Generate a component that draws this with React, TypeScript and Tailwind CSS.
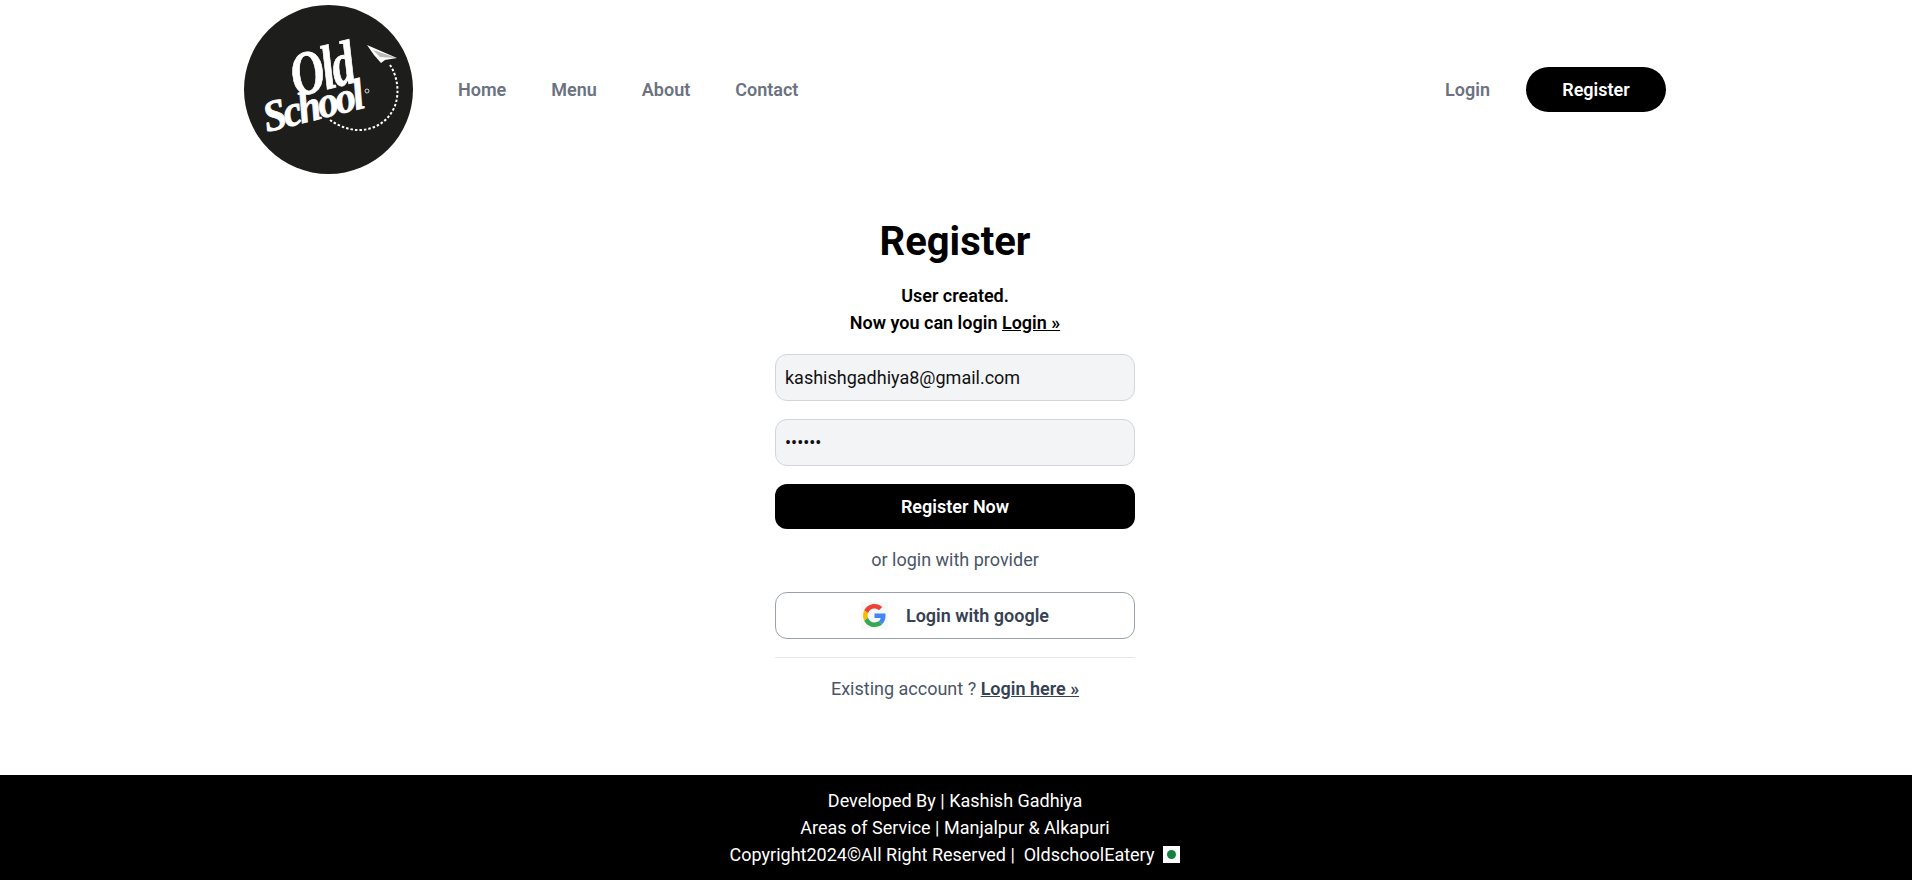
const roboto = "font-['Roboto',sans-serif]";

function Logo() {
  return (
    <div className="w-[169px] h-[169px] rounded-full bg-[#1d1d1b] shrink-0 overflow-hidden">
      <svg viewBox="0 0 169 169" className="w-full h-full">
        <g fill="#fff" stroke="#fff" strokeWidth="0.7" fontFamily="'Liberation Serif',serif" fontStyle="italic" fontWeight="700">
          <text transform="translate(52 92) rotate(-14) scale(0.9 1.2)" fontSize="52" letterSpacing="-3">
            Old
          </text>
          <text transform="translate(23 127) rotate(-14) scale(1.08 1.15)" fontSize="38" letterSpacing="-2.5">
            School
          </text>
        </g>
        <circle cx="123" cy="86" r="2" fill="none" stroke="#fff" strokeWidth="0.8" />
        <path d="M123 40 L153 53 L141 55 L137 58 L130 50 Z" fill="#fff" />
        <path d="M129 45 L153 53 L136 52 Z" fill="#1d1d1b" opacity="0.3" />
        <path
          d="M146 60 C154 72 156 90 150 103 C143 118 128 126 112 125 C102 124 93 120 86 115"
          fill="none"
          stroke="#fff"
          strokeWidth="2"
          strokeDasharray="2.5 2"
        />
      </svg>
    </div>
  );
}

function GoogleIcon() {
  return (
    <span className="w-[27px] h-[27px] bg-[#f8f8f8] flex items-center justify-center">
      <svg viewBox="0 0 48 48" className="w-[23px] h-[23px]">
        <path fill="#EA4335" d="M24 9.5c3.54 0 6.71 1.22 9.21 3.6l6.85-6.85C35.9 2.38 30.47 0 24 0 14.62 0 6.51 5.38 2.56 13.22l7.98 6.19C12.43 13.72 17.74 9.5 24 9.5z" />
        <path fill="#4285F4" d="M46.98 24.55c0-1.57-.15-3.09-.38-4.55H24v9.02h12.94c-.58 2.96-2.26 5.48-4.78 7.18l7.73 6c4.51-4.18 7.09-10.36 7.09-17.65z" />
        <path fill="#FBBC05" d="M10.53 28.59c-.48-1.45-.76-2.99-.76-4.59s.27-3.14.76-4.59l-7.98-6.19C.92 16.46 0 20.12 0 24c0 3.88.92 7.54 2.56 10.78l7.97-6.19z" />
        <path fill="#34A853" d="M24 48c6.48 0 11.93-2.13 15.89-5.81l-7.73-6c-2.15 1.45-4.92 2.3-8.16 2.3-6.26 0-11.57-4.22-13.47-9.91l-7.98 6.19C6.51 42.62 14.62 48 24 48z" />
      </svg>
    </span>
  );
}

export default function App() {
  return (
    <div className={`${roboto} min-h-[880px] flex flex-col bg-white text-base leading-[27px]`}>
      <div className="flex-1 flex flex-col pr-[2px]">
        <header className="w-[1422px] mx-auto h-[178px] flex items-center justify-between">
          <nav className="flex items-center gap-[45px] text-[#6b7280] font-semibold text-[18px]">
            <Logo />
            <a href="#">Home</a>
            <a href="#">Menu</a>
            <a href="#">About</a>
            <a href="#">Contact</a>
          </nav>
          <nav className="flex items-center gap-9 text-[#6b7280] font-semibold text-[18px]">
            <a href="#">Login</a>
            <a href="#" className="w-[140px] h-[45px] rounded-full bg-black text-white flex items-center justify-center">
              Register
            </a>
          </nav>
        </header>

        <main className="flex-1 flex flex-col items-center">
          <h1 className="text-[40px] leading-[60px] font-bold text-black mt-[34px]">Register</h1>
          <div className="text-center font-semibold text-black text-[18px] mt-[10px]">
            <div>User created.</div>
            <div>
              Now you can login{" "}
              <a href="#" className="underline">
                Login »
              </a>
            </div>
          </div>
          <form className="w-[360px] mt-[18px] flex flex-col">
            <input
              readOnly
              value="kashishgadhiya8@gmail.com"
              className="h-[47px] px-[9px] rounded-xl border border-gray-300 bg-gray-100 text-[18px] text-[#111] mb-[18px] outline-none"
            />
            <input
              readOnly
              type="password"
              value="secret"
              className="h-[47px] px-[9px] rounded-xl border border-gray-300 bg-gray-100 text-[18px] text-[#111] mb-[18px] outline-none"
            />
            <button type="button" className="h-[45px] rounded-xl bg-black text-white font-semibold text-[18px]">
              Register Now
            </button>
            <div className="text-center text-[18px] text-gray-600 mt-[11px] leading-[40px]">or login with provider</div>
            <button
              type="button"
              className="h-[47px] mt-[12px] rounded-xl border border-gray-400 bg-white flex items-center justify-center gap-[18px] text-gray-700 font-semibold text-[18px]"
            >
              <GoogleIcon />
              Login with google
            </button>
            <div className="border-t border-gray-200 mt-[18px] pt-[17px] text-center text-[18px] text-gray-600">
              Existing account ?{" "}
              <a href="#" className="underline font-semibold text-gray-700">
                Login here »
              </a>
            </div>
          </form>
        </main>
      </div>

      <footer className="bg-black text-white text-center text-[18px] py-3 pr-[2px]">
        <div>Developed By | Kashish Gadhiya</div>
        <div>Areas of Service | Manjalpur &amp; Alkapuri</div>
        <div className="flex items-center justify-center">
          <span className="whitespace-pre">Copyright2024©All Right Reserved |  OldschoolEatery</span>
          <span className="ml-[9px] w-[17px] h-[17px] bg-white flex items-center justify-center">
            <span className="w-[9px] h-[9px] rounded-full bg-[#15803d]" />
          </span>
        </div>
      </footer>
    </div>
  );
}
